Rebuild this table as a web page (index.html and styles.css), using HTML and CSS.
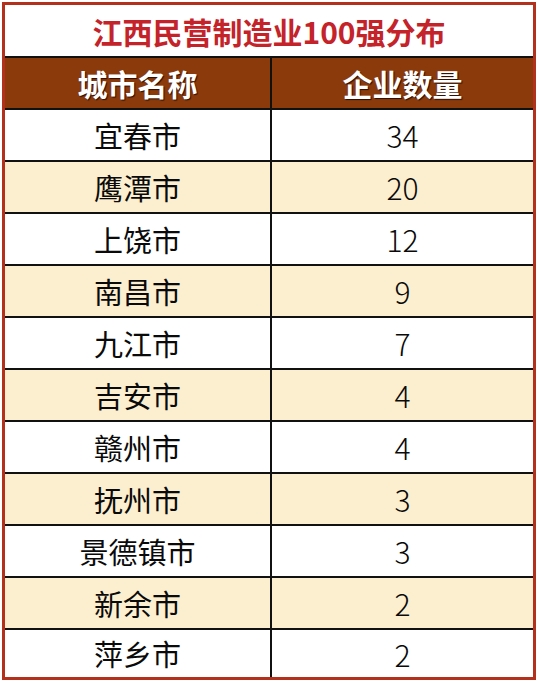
FILE: index.html
```html
<!DOCTYPE html>
<html lang="zh-CN">
<head>
<meta charset="utf-8">
<title>江西民营制造业100强分布</title>
<link rel="stylesheet" href="styles.css">
</head>
<body>
<div class="table">
  <div class="title">江西民营制造业100强分布</div>
  <div class="head">城市名称</div>
  <div class="head">企业数量</div>
  <div class="cell">宜春市</div><div class="cell num">34</div>
  <div class="cell alt">鹰潭市</div><div class="cell alt num">20</div>
  <div class="cell">上饶市</div><div class="cell num">12</div>
  <div class="cell alt">南昌市</div><div class="cell alt num">9</div>
  <div class="cell">九江市</div><div class="cell num">7</div>
  <div class="cell alt">吉安市</div><div class="cell alt num">4</div>
  <div class="cell">赣州市</div><div class="cell num">4</div>
  <div class="cell alt">抚州市</div><div class="cell alt num">3</div>
  <div class="cell">景德镇市</div><div class="cell num">3</div>
  <div class="cell alt">新余市</div><div class="cell alt num">2</div>
  <div class="cell last">萍乡市</div><div class="cell last num">2</div>
</div>
</body>
</html>
```
FILE: styles.css
```css
html, body {
  margin: 0;
  padding: 0;
  background: #ffffff;
}
body {
  padding: 2px 0 0 2px;
  font-family: "Noto Sans CJK SC", "Noto Sans", sans-serif;
}
.table {
  width: 528px;
  border: 3px solid #b3301c;
  display: grid;
  grid-template-columns: 265px 261px;
  gap: 2px;
  background: #111111;
}
.title {
  grid-column: 1 / 3;
  height: 51px;
  background: #ffffff;
  color: #c4232a;
  font-weight: 700;
  font-size: 30px;
  display: flex;
  align-items: center;
  justify-content: center;
  line-height: 1;
}
.head {
  height: 50px;
  background: #8b3b0b;
  color: #ffffff;
  font-weight: 700;
  font-size: 30px;
  display: flex;
  align-items: center;
  justify-content: center;
  line-height: 1;
  text-shadow: 1px 1px 1px #2a0d00;
}
.cell {
  height: 50px;
  background: #ffffff;
  color: #0a0a0a;
  font-size: 29px;
  font-weight: 400;
  display: flex;
  align-items: center;
  justify-content: center;
  line-height: 1;
}
.cell.num {
  font-size: 30px;
  font-weight: 300;
}
.cell.alt {
  background: #fcefd0;
}
.cell.last {
  height: 47px;
}
```
